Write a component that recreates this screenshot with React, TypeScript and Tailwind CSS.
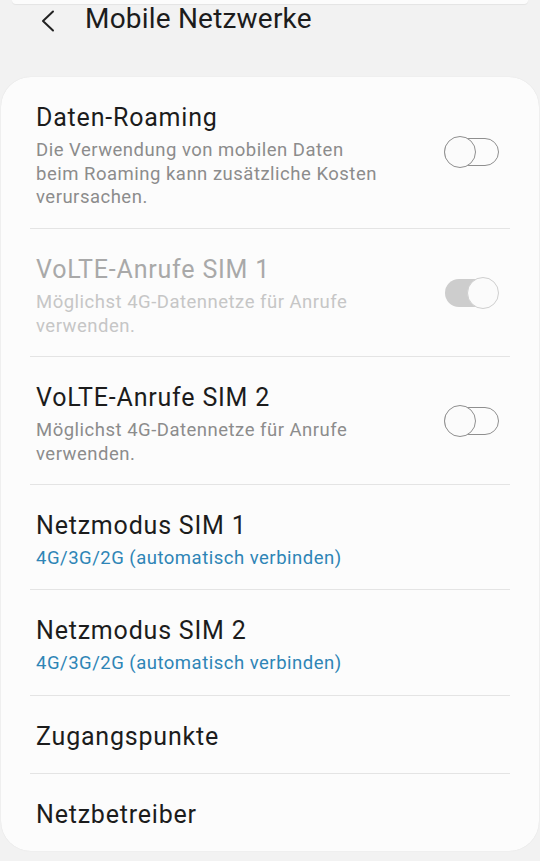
import React from 'react';

type Row = {
  title: string;
  sub?: string;
  toggle?: 'off' | 'on-disabled';
  disabled?: boolean;
  accent?: boolean;
  height: string;
};

const rows: Row[] = [
  {
    title: 'Daten-Roaming',
    sub: 'Die Verwendung von mobilen Daten beim Roaming kann zusätzliche Kosten verursachen.',
    toggle: 'off',
    height: 'h-[152px]',
  },
  {
    title: 'VoLTE-Anrufe SIM 1',
    sub: 'Möglichst 4G-Datennetze für Anrufe verwenden.',
    toggle: 'on-disabled',
    disabled: true,
    height: 'h-[128px]',
  },
  {
    title: 'VoLTE-Anrufe SIM 2',
    sub: 'Möglichst 4G-Datennetze für Anrufe verwenden.',
    toggle: 'off',
    height: 'h-[128px]',
  },
  { title: 'Netzmodus SIM 1', sub: '4G/3G/2G (automatisch verbinden)', accent: true, height: 'h-[105px]' },
  { title: 'Netzmodus SIM 2', sub: '4G/3G/2G (automatisch verbinden)', accent: true, height: 'h-[106px]' },
  { title: 'Zugangspunkte', height: 'h-[78px]' },
  { title: 'Netzbetreiber', height: 'h-[77px]' },
];

function Toggle({ state }: { state: 'off' | 'on-disabled' }) {
  if (state === 'on-disabled') {
    return (
      <div className="relative w-[55px] h-[32px] shrink-0">
        <div className="absolute left-[1px] top-[2px] w-[44px] h-[28px] rounded-full bg-[#cdcdcd]" />
        <div className="absolute right-0 top-0 w-[32px] h-[32px] rounded-full bg-[#fbfbfb] border-[1.5px] border-[#cfcfcf]" />
      </div>
    );
  }
  return (
    <div className="relative w-[55px] h-[32px] shrink-0">
      <div className="absolute left-0 right-0 top-[2px] h-[28px] rounded-full border-[1.5px] border-[#8f8f8f]" />
      <div className="absolute left-0 top-0 w-[32px] h-[32px] rounded-full bg-[#fbfbfb] border-[1.5px] border-[#8f8f8f]" />
    </div>
  );
}

export default function App() {
  return (
    <div className="w-[540px] h-[861px] bg-[#f2f2f2] overflow-hidden font-['Roboto',sans-serif]">
      {/* bottom edge of the card above */}
      <div className="mx-[12px] h-[4px] bg-[#fcfcfc] rounded-b-[24px] shadow-[0_1px_1px_rgba(0,0,0,0.06)]" />

      {/* header */}
      <div className="h-[73px] flex items-start pl-[40px]">
        <svg className="mt-[6px]" width="16" height="22" viewBox="0 0 16 22" fill="none">
          <path d="M13 1.5L3 11l10 9.5" stroke="#222" strokeWidth="2" strokeLinecap="round" strokeLinejoin="round" />
        </svg>
        <h1 className="ml-[29px] text-[28px] leading-[34px] tracking-[0.2px] -mt-[2px] text-[#1c1c1c]">Mobile Netzwerke</h1>
      </div>

      {/* settings card */}
      <div className="mx-[1px] h-[774px] bg-[#fcfcfc] rounded-[30px] px-[29px] shadow-[0_0_1px_rgba(0,0,0,0.12)]">
        {rows.map((row, i) => (
          <div
            key={row.title}
            className={`${row.height} flex items-start pl-[6px] pr-[11px] pt-[26px] ${
              i < rows.length - 1 ? 'border-b border-[#e4e4e4]' : ''
            }`}
          >
            <div className="flex-1 min-w-0">
              <div
                className={`text-[25px] leading-[30px] tracking-[0.8px] ${
                  row.disabled ? 'text-[#a9a9a9]' : 'text-[#1c1c1c]'
                }`}
              >
                {row.title}
              </div>
              {row.sub && (
                <div
                  className={`mt-[6px] text-[18.5px] leading-[23.5px] tracking-[0.5px] max-w-[348px] ${
                    row.accent ? 'text-[#2e85b6]' : row.disabled ? 'text-[#c6c6c6]' : 'text-[#8c8c8c]'
                  }`}
                >
                  {row.sub}
                </div>
              )}
            </div>
            {row.toggle && (
              <div className={`self-center ${row.title === 'Daten-Roaming' ? '-mt-[28px]' : '-mt-[26px]'}`}>
                <Toggle state={row.toggle} />
              </div>
            )}
          </div>
        ))}
      </div>
    </div>
  );
}
